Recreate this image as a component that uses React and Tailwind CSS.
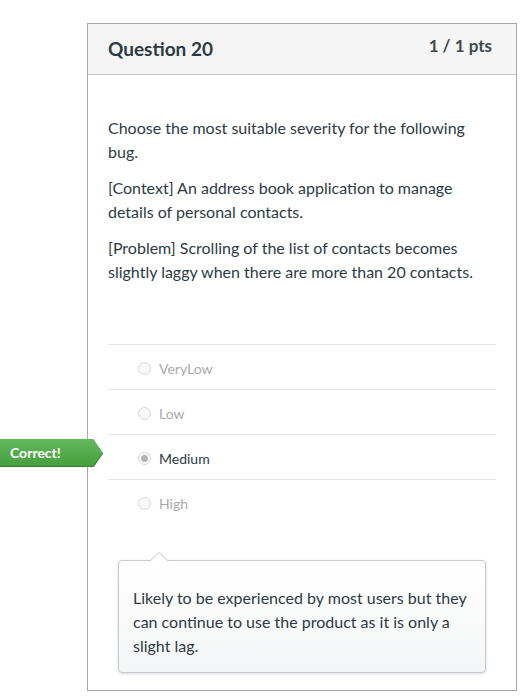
import React from 'react';

const answers = [
  { label: 'VeryLow', selected: false },
  { label: 'Low', selected: false },
  { label: 'Medium', selected: true },
  { label: 'High', selected: false },
];

const Radio = ({ selected }) => (
  <span className="w-[13px] h-[13px] rounded-full border border-[#d6d6d6] bg-[#f8f8f8] flex items-center justify-center shrink-0">
    {selected && <span className="w-[7px] h-[7px] rounded-full bg-[#b4b4b4]" />}
  </span>
);

const CorrectBadge = () => (
  <div className="absolute left-0 top-[439px] flex items-stretch h-[28px]">
    <div className="w-[93px] bg-gradient-to-b from-[#62b85b] to-[#479f3f] border-b border-[#3a7f33] text-white font-bold text-[14px] pl-[10px] flex items-center">
      Correct!
    </div>
    <svg width="10" height="28" viewBox="0 0 10 28" className="block">
      <defs>
        <linearGradient id="g" x1="0" y1="0" x2="0" y2="1">
          <stop offset="0" stopColor="#62b85b" />
          <stop offset="1" stopColor="#479f3f" />
        </linearGradient>
      </defs>
      <path d="M0 0 L0.5 0 L10 14 L0.5 28 L0 28 Z" fill="url(#g)" />
      <path d="M0.5 27.5 L10 14" stroke="#3a7f33" strokeWidth="1" />
    </svg>
  </div>
);

export default function App() {
  return (
    <div className="relative w-[527px] h-[700px] bg-white overflow-hidden font-['Lato','Open_Sans',sans-serif] text-[#2d3b45]">
      <div className="ml-[87px] mt-[23px] w-[430px] h-[668px] border border-[#a8a8a8] flex flex-col">
        <div className="h-[51px] bg-[#f5f5f5] border-b border-[#c6c6c6] pl-[20px] pr-[24px] flex justify-between">
          <h2 className="text-[19px] font-bold mt-[13px] leading-[24px]">Question 20</h2>
          <span className="text-[17px] font-bold text-[#3d4a52] mt-[11px] leading-[22px]">1 / 1 pts</span>
        </div>

        <div className="px-[20px] pt-[41px] flex flex-col">
          <div className="text-[16px] leading-[24px] flex flex-col gap-[12px] pr-[20px]">
            <p>Choose the most suitable severity for the following bug.</p>
            <p>[Context] An address book application to manage details of personal contacts.</p>
            <p>[Problem] Scrolling of the list of contacts becomes slightly laggy when there are more than 20 contacts.</p>
          </div>

          <div className="mt-[60px] flex flex-col">
            {answers.map(a => (
              <div key={a.label} className="h-[45px] border-t border-[#e6e6e6] flex items-center pt-[2px] pl-[30px] gap-[8px]">
                <Radio selected={a.selected} />
                <span className={`text-[14px] ${a.selected ? 'text-[#2d3b45]' : 'text-[#a9a9a9]'}`}>{a.label}</span>
              </div>
            ))}
          </div>

          <div className="relative mt-[36px] mx-[10px]">
            <svg width="18" height="10" viewBox="0 0 18 10" className="absolute -top-[8px] left-[32px]">
              <path d="M0 9 L9 0.5 L18 9" fill="#ffffff" stroke="#bfc6cc" strokeWidth="1" />
            </svg>
            <div className="rounded-[4px] border border-[#c3c9ce] bg-gradient-to-b from-white to-[#f4f5f6] shadow-[0_1px_3px_rgba(0,0,0,0.15)] pl-[14px] pr-[12px] pt-[25px] pb-[14px] text-[16px] leading-[24px]">
              Likely to be experienced by most users but they can continue to use the product as it is only a slight lag.
            </div>
            <div className="absolute top-[1px] left-[33px] w-[16px] h-[2px] bg-white" />
          </div>
        </div>
      </div>
      <CorrectBadge />
    </div>
  );
}
